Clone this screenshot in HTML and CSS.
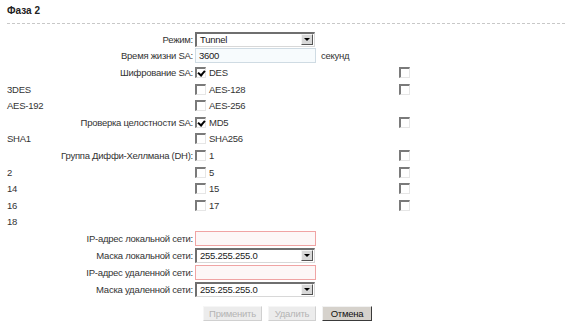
FILE: index.html
```html
<!DOCTYPE html>
<html lang="ru">
<head>
<meta charset="UTF-8">
<title>Фаза 2</title>
<link rel="stylesheet" href="styles.css">
</head>
<body>

<div class="title">Фаза 2</div>
<div class="sep"></div>

<div class="form">
    <div class="lbl">Режим:</div>
    <div class="fld"><span class="sel"><span class="val">Tunnel</span><span class="arr"></span></span></div>
    <div></div>

    <div class="lbl">Время жизни SA:</div>
    <div class="fld"><span class="inp">3600</span><span class="unit">секунд</span></div>
    <div></div>

    <div class="lbl">Шифрование SA:</div>
    <div class="fld"><span class="cb on"></span>DES</div>
    <div class="ext"><span class="cb"></span></div>

    <div class="left">3DES</div>
    <div class="fld"><span class="cb"></span>AES-128</div>
    <div class="ext"><span class="cb"></span></div>

    <div class="left">AES-192</div>
    <div class="fld"><span class="cb"></span>AES-256</div>
    <div></div>

    <div class="lbl">Проверка целостности SA:</div>
    <div class="fld"><span class="cb on"></span>MD5</div>
    <div class="ext"><span class="cb"></span></div>

    <div class="left">SHA1</div>
    <div class="fld"><span class="cb"></span>SHA256</div>
    <div></div>

    <div class="lbl">Группа Диффи-Хеллмана (DH):</div>
    <div class="fld"><span class="cb"></span>1</div>
    <div class="ext"><span class="cb"></span></div>

    <div class="left">2</div>
    <div class="fld"><span class="cb"></span>5</div>
    <div class="ext"><span class="cb"></span></div>

    <div class="left">14</div>
    <div class="fld"><span class="cb"></span>15</div>
    <div class="ext"><span class="cb"></span></div>

    <div class="left">16</div>
    <div class="fld"><span class="cb"></span>17</div>
    <div class="ext"><span class="cb"></span></div>

    <div class="left">18</div>
    <div></div>
    <div></div>
</div>

<div class="form net">
    <div class="lbl">IP-адрес локальной сети:</div>
    <div class="fld"><span class="inp err"></span></div>
    <div></div>

    <div class="lbl">Маска локальной сети:</div>
    <div class="fld"><span class="sel"><span class="val">255.255.255.0</span><span class="arr"></span></span></div>
    <div></div>

    <div class="lbl">IP-адрес удаленной сети:</div>
    <div class="fld"><span class="inp err"></span></div>
    <div></div>

    <div class="lbl">Маска удаленной сети:</div>
    <div class="fld"><span class="sel"><span class="val">255.255.255.0</span><span class="arr"></span></span></div>
    <div></div>
</div>

<div class="buttons">
    <span class="btn off apply">Применить</span>
    <span class="btn off del">Удалить</span>
    <span class="btn cancel">Отмена</span>
</div>

</body>
</html>
```

FILE: styles.css
```css
body {
    margin: 0;
    padding: 4px 7px;
    font-family: "Liberation Sans", Arial, sans-serif;
    font-size: 9.5px;
    letter-spacing: -0.25px;
    color: #333;
    background: #fff;
}

/* TITLE */
.title {
    font-weight: bold;
    font-size: 10px;
    letter-spacing: 0;
    line-height: 13px;
    color: #222;
}

.sep {
    margin-top: 6px;
    border-top: 1px dashed #c8c8c8;
}

/* FORM GRID */
.form {
    display: grid;
    grid-template-columns: 188px 202px 1fr;
    grid-auto-rows: 16.6px;
    margin-top: 7px;
    align-items: center;
}

.form.net {
    grid-auto-rows: 17px;
    margin-top: 0;
}

.lbl {
    text-align: right;
    padding-right: 2px;
}

.fld {
    display: flex;
    align-items: center;
}

.ext {
    display: flex;
    align-items: center;
}

/* SELECT */
.sel {
    display: flex;
    width: 117px;
    height: 12px;
    border: 2px solid #6f6f6f;
    border-right: 1px solid #d8d8d8;
    border-bottom: 1px solid #d8d8d8;
    background: #fff;
}

.sel .val {
    flex: 1;
    line-height: 12px;
    padding-left: 3px;
    color: #1a1a1a;
}

.sel .arr {
    width: 12px;
    height: 11px;
    margin-right: 1px;
    background: #d8d8d8;
    border: 1px solid #f4f4f4;
    border-right-color: #555;
    border-bottom-color: #555;
    box-sizing: border-box;
    position: relative;
}

.sel .arr::after {
    content: "";
    position: absolute;
    left: 2px;
    top: 3px;
    border-left: 3px solid transparent;
    border-right: 3px solid transparent;
    border-top: 3px solid #000;
}

/* INPUT */
.inp {
    display: block;
    width: 116px;
    height: 13px;
    line-height: 13px;
    padding-left: 3px;
    border: 1px solid #cfdbe3;
    background: #f7fbfd;
    color: #1a1a1a;
}

.inp.err {
    border-color: #f0a4a4;
    background: #fdf7f7;
}

.unit {
    margin-left: 5px;
}

/* CHECKBOX */
.cb {
    display: inline-block;
    position: relative;
    width: 11px;
    height: 11px;
    box-sizing: border-box;
    border: 2px solid #7a7a7a;
    border-right: 1px solid #e6e6e6;
    border-bottom: 1px solid #e6e6e6;
    background: #fff;
    margin-right: 3px;
}

.ext .cb {
    margin-left: 2px;
}

.cb.on::after {
    content: "";
    position: absolute;
    left: 2px;
    top: 0;
    width: 3px;
    height: 5px;
    border: solid #000;
    border-width: 0 2px 2px 0;
    transform: rotate(40deg);
}

/* BUTTONS */
.buttons {
    display: flex;
    gap: 6px;
    margin-top: 8px;
    margin-left: 196px;
}

.btn {
    display: inline-block;
    box-sizing: border-box;
    height: 15px;
    line-height: 13px;
    text-align: center;
    background: #d6d2cc;
    border: 1px solid #f2f2f2;
    border-right-color: #3a3a3a;
    border-bottom-color: #3a3a3a;
    color: #111;
}

.btn.off {
    background: #ececec;
    color: #b4b4b4;
    border-color: #f6f6f6 #d0d0d0 #d0d0d0 #f6f6f6;
}

.apply { width: 59px; }
.del { width: 48px; }
.cancel { width: 50px; }
```
